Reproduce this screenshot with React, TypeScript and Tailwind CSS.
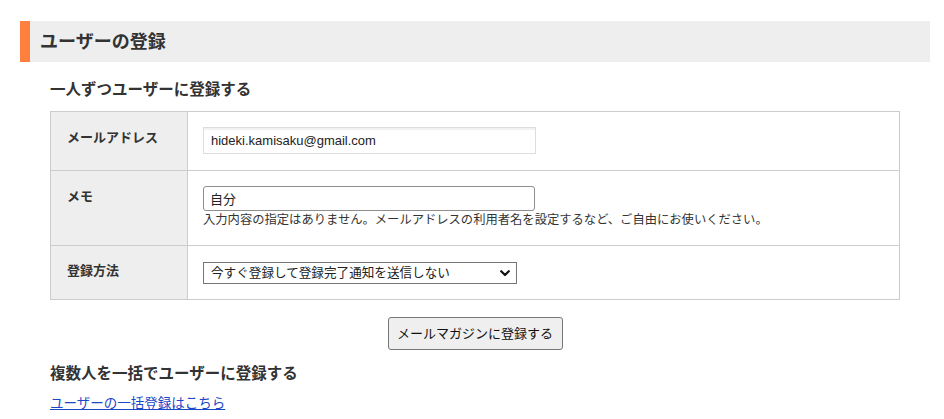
import React, { useState } from 'react'

const jp = '"Liberation Sans", "Noto Sans CJK JP", sans-serif';

export default function App() {
    const [email, setEmail] = useState<string>("hideki.kamisaku@gmail.com");
    const [memo, setMemo] = useState<string>("自分");
    const [method, setMethod] = useState<string>("now-silent");

    return (
        <div className="min-h-[419px] bg-white pt-[21px] pl-[20px] text-[#333]" style={{ fontFamily: jp }}>
            <div className="w-[910px]">
                {/* 見出し */}
                <div className="flex h-[41px] items-center border-l-[10px] border-[#ff7f3f] bg-[#eee] pl-[10px]">
                    <h2 className="text-[18px] font-bold leading-none text-[#333]">ユーザーの登録</h2>
                </div>

                <div className="px-[30px]">
                    {/* 一人ずつ */}
                    <h3 className="mt-[16px] mb-[9px] text-[15.5px] font-bold leading-[24px]">一人ずつユーザーに登録する</h3>

                    <table className="w-[850px] border-collapse border border-[#ccc] text-[13px]">
                        <tbody>
                            <tr className="h-[59px]">
                                <th className="w-[137px] border border-[#ccc] bg-[#eee] pl-[16px] pt-[16px] text-left align-top text-[13px] font-bold leading-[20px]">
                                    メールアドレス
                                </th>
                                <td className="border border-[#ccc] pl-[15px] pt-[15px] align-top">
                                    <input
                                        type="text"
                                        value={email}
                                        onChange={(e) => setEmail(e.target.value)}
                                        className="block h-[27px] w-[333px] border border-[#ddd] bg-white px-[7px] text-[13px] text-[#222] shadow-[inset_0_2px_0_#f2f2f2] outline-none"
                                    />
                                </td>
                            </tr>
                            <tr className="h-[75px]">
                                <th className="border border-[#ccc] bg-[#eee] pl-[16px] pt-[16px] text-left align-top text-[13px] font-bold leading-[20px]">
                                    メモ
                                </th>
                                <td className="border border-[#ccc] pl-[15px] pt-[15px] align-top">
                                    <input
                                        type="text"
                                        value={memo}
                                        onChange={(e) => setMemo(e.target.value)}
                                        className="block h-[25px] w-[332px] rounded-[3px] border border-[#8e8e8e] bg-white px-[6px] text-[13px] text-[#222] outline-none"
                                    />
                                    <p className="text-[12.3px] leading-[18px] text-[#333]">
                                        入力内容の指定はありません。メールアドレスの利用者名を設定するなど、ご自由にお使いください。
                                    </p>
                                </td>
                            </tr>
                            <tr className="h-[54px]">
                                <th className="border border-[#ccc] bg-[#eee] pl-[16px] pt-[15px] text-left align-top text-[13px] font-bold leading-[20px]">
                                    登録方法
                                </th>
                                <td className="border border-[#ccc] pl-[15px] pt-[16px] align-top">
                                    <div className="relative w-[314px]">
                                        <select
                                            value={method}
                                            onChange={(e) => setMethod(e.target.value)}
                                            className="block h-[22px] w-[314px] appearance-none rounded-none border border-[#767676] bg-white pl-[7px] text-[12.6px] leading-[20px] text-[#222] outline-none"
                                        >
                                            <option value="now-silent">今すぐ登録して登録完了通知を送信しない</option>
                                            <option value="now-notify">今すぐ登録して登録完了通知を送信する</option>
                                            <option value="confirm">確認メールを送信して本人の承認後に登録する</option>
                                        </select>
                                        <svg className="pointer-events-none absolute right-[7px] top-[8px]" width="10" height="7" viewBox="0 0 10 7">
                                            <path d="M1.2 1.2 L5 5 L8.8 1.2" fill="none" stroke="#111" strokeWidth="2.2" strokeLinecap="round" strokeLinejoin="round" />
                                        </svg>
                                    </div>
                                </td>
                            </tr>
                        </tbody>
                    </table>

                    {/* 登録ボタン */}
                    <div className="flex w-[850px] justify-center pt-[17px]">
                        <button
                            type="button"
                            className="h-[33px] w-[175px] cursor-pointer rounded-[3px] border border-[#767676] bg-[#efefef] text-[13px] text-[#111]"
                        >
                            メールマガジンに登録する
                        </button>
                    </div>

                    {/* 複数人 */}
                    <h3 className="mt-[12px] text-[15.5px] font-bold leading-[24px]">複数人を一括でユーザーに登録する</h3>
                    <a href="#" className="mt-[8px] inline-block text-[13.5px] leading-[20px] text-[#1a47c8] underline">
                        ユーザーの一括登録はこちら
                    </a>
                </div>
            </div>
        </div>
    )
}
